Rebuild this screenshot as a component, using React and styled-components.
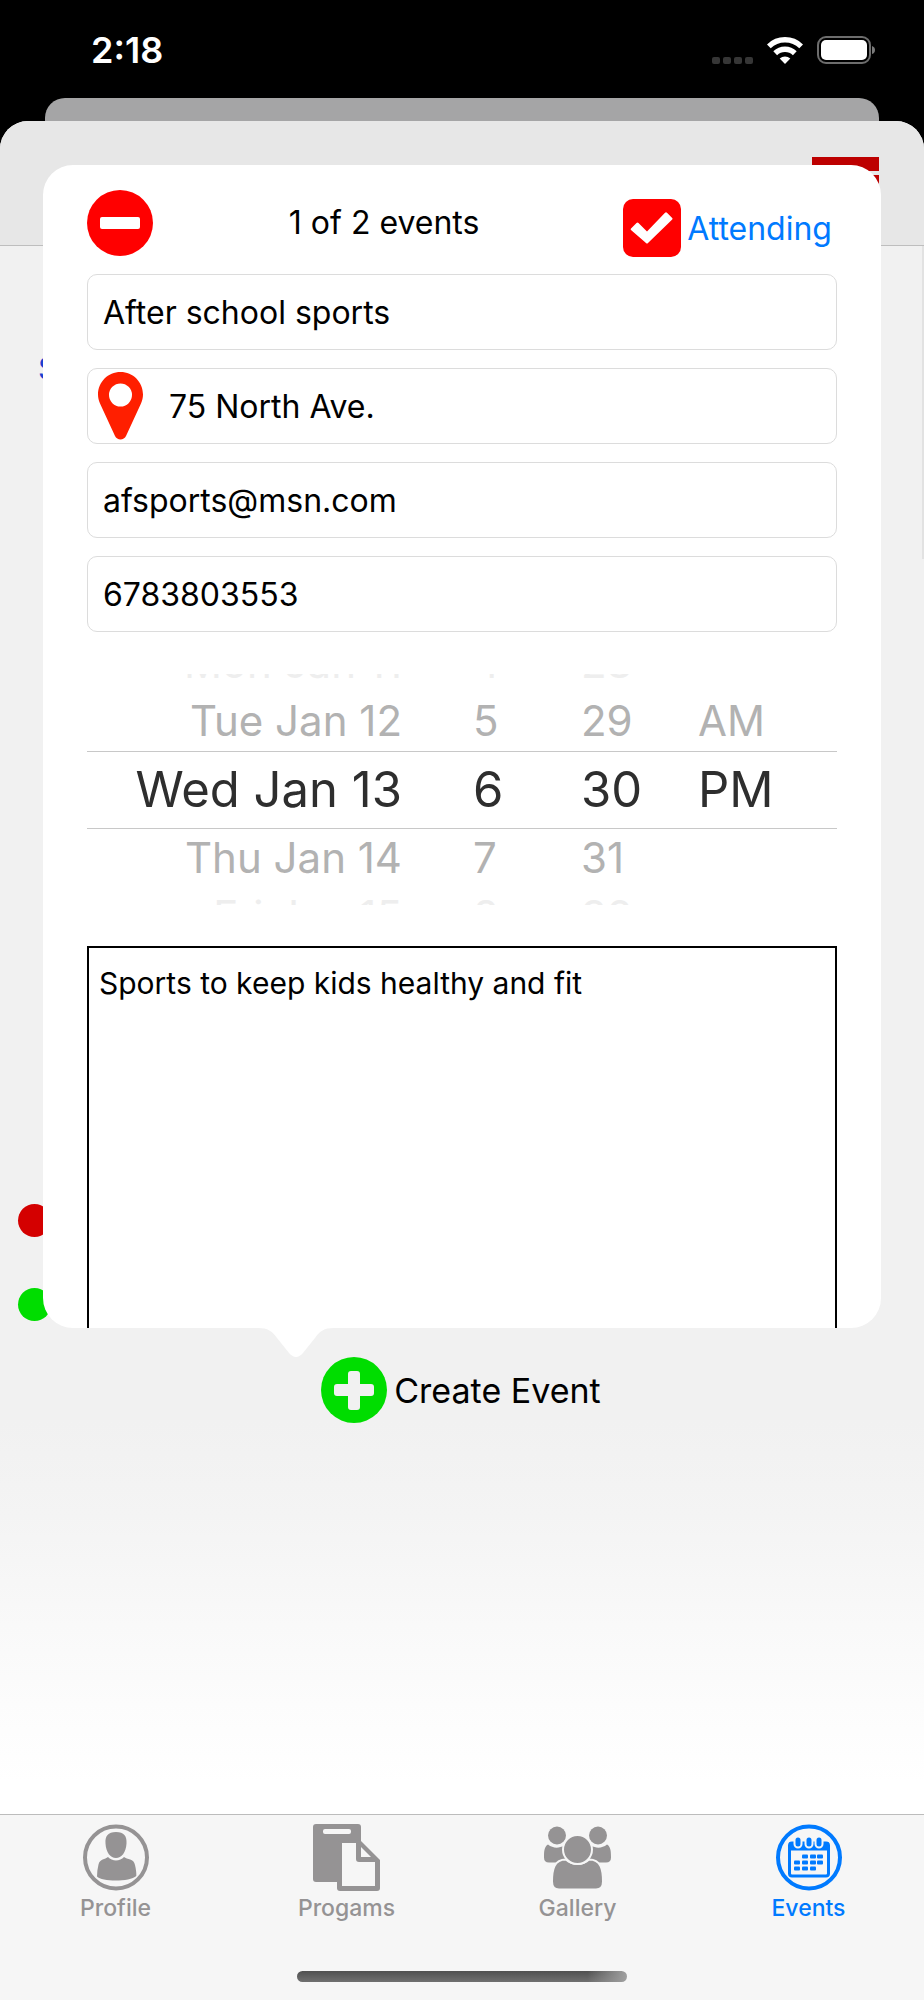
import React, { useState } from 'react';
import styled, { createGlobalStyle } from 'styled-components';

const GlobalStyle = createGlobalStyle`
    * {
        box-sizing: border-box;
    }

    body {
        margin: 0;
        background: #000;
        color: #000;
        font-family: Inter, "Liberation Sans", sans-serif;
    }

    button, input, textarea {
        font-family: inherit;
    }
`;

const Screen = styled.div`
    display: flex;
    flex-direction: column;
    min-height: 100vh;
`;

const StatusBar = styled.header`
    display: flex;
    justify-content: space-between;
    align-items: center;
    height: 98px;
    padding: 2px 48px 0 91px;
    color: #fff;
`;

const Clock = styled.time`
    font-size: 36px;
    font-weight: 600;
`;

const StatusIcons = styled.div`
    display: flex;
    align-items: center;
    gap: 14px;
`;

const BackSheet = styled.div`
    height: 23px;
    margin: 0 45px;
    border-radius: 20px 20px 0 0;
    background: #a5a5a6;
`;

const Sheet = styled.main`
    position: relative;
    display: flex;
    flex: 1;
    flex-direction: column;
    overflow: hidden;
    border-radius: 28px 28px 0 0;
    background: #fff;
`;

const NavBar = styled.nav`
    display: flex;
    justify-content: flex-end;
    height: 125px;
    padding: 36px 45px 0;
    border-bottom: 1px solid #bebebe;
    background: #e7e7e7;
`;

const MenuButton = styled.button`
    display: flex;
    flex-direction: column;
    gap: 4px;
    width: 67px;
    height: 54px;
    padding: 0;
    border: 0;
    background: none;
`;

const MenuBar = styled.span`
    height: 14px;
    background: #bd0000;
`;

const Content = styled.section`
    flex: 1;
    padding-top: 90px;
    border-right: 2px solid #e9e9e9;
    border-image: linear-gradient(#e2e2e2 20%, transparent 20%) 1;
    background: linear-gradient(#f1f1f1 75%, #f4f4f4 81%, #f9f9f9 88%, #fff 98%);
`;

const DayLabel = styled.div`
    height: 814px;
    padding: 14px 0 0 38px;
    color: #1a3fd0;
    font-size: 30px;
    line-height: 36px;
`;

const Legend = styled.div`
    display: flex;
    flex-direction: column;
    gap: 51px;
    padding: 54px 0 36px 18px;
`;

const Dot = styled.span`
    width: 33px;
    height: 33px;
    border-radius: 50%;
    background: ${(props) => props.$color};
`;

const CreateButton = styled.button`
    display: flex;
    align-items: center;
    gap: 7px;
    margin: 0 auto;
    padding: 0;
    border: 0;
    background: none;
    color: #000;
    font-size: 34px;
`;

const Popover = styled.form`
    position: absolute;
    top: 44px;
    left: 43px;
    right: 43px;
    padding: 25px 44px 0;
    border-radius: 30px;
    background: #fff;
`;

const Tail = styled.svg`
    position: absolute;
    top: 100%;
    left: 215px;
`;

const PopoverHeader = styled.div`
    display: flex;
    justify-content: space-between;
    margin-bottom: 18px;
    padding-right: 5px;
`;

const RemoveButton = styled.button`
    display: flex;
    padding: 0;
    border: 0;
    background: none;
`;

const Count = styled.div`
    margin-right: 8px;
    font-size: 32px;
    line-height: 66px;
`;

const Attending = styled.label`
    display: flex;
    align-items: center;
    gap: 6px;
    height: 56px;
    margin-top: 10px;
    color: #007aff;
    font-size: 32px;
`;

const CheckCell = styled.span`
    display: grid;

    > * {
        grid-area: 1 / 1;
    }

    svg {
        visibility: hidden;
        pointer-events: none;
    }

    input:checked + svg {
        visibility: visible;
    }
`;

const CheckInput = styled.input`
    appearance: none;
    width: 58px;
    height: 58px;
    margin: 0;
    border-radius: 10px;
    background: #ff0000;
`;

const Fields = styled.div`
    display: flex;
    flex-direction: column;
    gap: 18px;
`;

const Field = styled.label`
    display: flex;
    align-items: center;
    gap: 26px;
    height: 76px;
    padding-left: ${(props) => (props.$icon ? '10px' : '15px')};
    border: 1px solid #dcdcdc;
    border-radius: 10px;
`;

const TextInput = styled.input`
    flex: 1;
    min-width: 0;
    padding: 0;
    border: 0;
    outline: 0;
    background: none;
    color: #000;
    font-size: 32px;
`;

const Picker = styled.div`
    display: grid;
    grid-template-columns: 315px 108px 117px 1fr;
    height: 231px;
    margin: 42px 0 41px;
    overflow: hidden;
    background:
        linear-gradient(#c8c8c8, #c8c8c8) 0 77px / 100% 1px no-repeat,
        linear-gradient(#c8c8c8, #c8c8c8) 0 154px / 100% 1px no-repeat;
`;

const Wheel = styled.ul`
    display: flex;
    flex-direction: column;
    align-items: ${(props) => (props.$right ? 'flex-end' : 'flex-start')};
    justify-content: center;
    height: 231px;
    margin: 0;
    padding: 0 0 0 ${(props) => (props.$right ? '0' : '71px')};
    list-style: none;
    white-space: nowrap;
`;

const rowHeights = ['77px', '60px', '56px'];

const Option = styled.li`
    height: ${(props) => rowHeights[props.$distance]};
    flex-shrink: 0;
    color: ${(props) => ['#2e2e2e', '#b2b2b2', '#eeeeee'][props.$distance]};
    font-size: ${(props) => (props.$distance === 0 ? '49px' : '42px')};
    line-height: ${(props) => rowHeights[props.$distance]};
`;

const Notes = styled.textarea`
    display: block;
    width: 100%;
    height: 382px;
    padding: 17px 10px;
    border: 2px solid #000;
    border-bottom: 0;
    border-radius: 0;
    outline: 0;
    resize: none;
    background: none;
    color: #000;
    font-size: 30px;
    line-height: 36px;
`;

const TabBar = styled.footer`
    display: flex;
    flex-direction: column;
    align-items: center;
    justify-content: space-between;
    height: 186px;
    padding: 9px 0 18px;
    border-top: 1px solid #bcbcbc;
    background: #f6f6f6;
`;

const Tabs = styled.nav`
    display: grid;
    grid-template-columns: repeat(4, 1fr);
    width: 100%;
`;

const Tab = styled.a`
    display: flex;
    flex-direction: column;
    align-items: center;
    gap: 3px;
    color: ${(props) => (props.$active ? '#007aff' : '#959394')};
    font-size: 23px;
    font-weight: 500;
    line-height: 28px;
    text-decoration: none;

    svg {
        height: 67px;
    }
`;

const HomeIndicator = styled.div`
    width: 330px;
    height: 11px;
    border-radius: 6px;
    background:
        linear-gradient(to right, transparent 88%, #a0a0a0),
        linear-gradient(#505050, #707070);
`;

function SignalDots() {
  return (
    <svg width="41" height="27" viewBox="0 0 41 27" fill="#363636">
      {[0, 11, 22, 33].map((x) => (
        <rect key={x} x={x} y="20" width="8" height="7" rx="2" />
      ))}
    </svg>
  );
}

function WifiIcon() {
  return (
    <svg width="36" height="27" viewBox="0 0 36 27">
      <g fill="none" stroke="#fff" strokeWidth="5.4">
        <path d="M1.8 9.4a23 23 0 0 1 32.4 0" />
        <path d="M8.2 16.2a14 14 0 0 1 19.6 0" />
      </g>
      <path d="M12.7 21.4a8 8 0 0 1 10.6 0L18 27z" fill="#fff" />
    </svg>
  );
}

function BatteryIcon() {
  return (
    <svg width="59" height="28" viewBox="0 0 59 28">
      <rect x="1" y="1" width="52" height="26" rx="8" fill="none" stroke="#6d6d6d" strokeWidth="2" />
      <rect x="4" y="4" width="46" height="20" rx="5" fill="#fff" />
      <path d="M55 10q3 1 3 4t-3 4z" fill="#7a7a7a" />
    </svg>
  );
}

function MinusIcon() {
  return (
    <svg width="66" height="66" viewBox="0 0 66 66">
      <circle cx="33" cy="33" r="33" fill="#ff0000" />
      <rect x="13" y="27" width="40" height="12" rx="2" fill="#fff" />
    </svg>
  );
}

function PlusIcon() {
  return (
    <svg width="66" height="66" viewBox="0 0 66 66">
      <circle cx="33" cy="33" r="33" fill="#00dd00" />
      <g fill="#f1f1f1">
        <rect x="13" y="27" width="40" height="12" rx="3" />
        <rect x="27" y="14" width="12" height="39" rx="3" />
      </g>
    </svg>
  );
}

function CheckIcon() {
  return (
    <svg width="58" height="58" viewBox="0 0 58 58">
      <path d="M8 29.5 13.5 24q1-1 2 0l8.500 8.500L42 13.700q1-1 2 0l5.200 5.200q.8.8 0 1.600L25 44q-1 1-2 0L8 31q-.8-.8 0-1.500z" fill="#fff" />
    </svg>
  );
}

function PinIcon() {
  return (
    <svg width="45" height="68" viewBox="0 0 45 68">
      <path
        fillRule="evenodd"
        d="M22.500 0C10 0 0 10 0 22.500c0 3 .7 6.200 2 9L17 64c2 4.500 9 4.500 11 0l15-32.500c1.300-2.800 2-6 2-9C45 10 35 0 22.500 0zm0 11.500a11.500 11.500 0 1 1 0 23 11.500 11.500 0 0 1 0-23z"
        fill="#ff1f00"
      />
    </svg>
  );
}

function ProfileIcon() {
  return (
    <svg width="66" height="66" viewBox="0 0 66 66" fill="currentColor">
      <circle cx="33" cy="33" r="31" fill="none" stroke="currentColor" strokeWidth="4" />
      <path d="M33 7.500c-8 0-11 4-10.500 11.500C23 28 27.500 33.500 33 33.500S43 28 43.500 19C44 11.500 41 7.500 33 7.500z" />
      <path d="M25 32.500c4 4.500 12 4.500 16 0 3 2.500 10 1.500 11 8 1 4 1.500 8 1.300 11C47 57.500 19 57.500 14 52c0-4 .5-8 1.500-12 1.500-6 6.500-5 9.500-7.500z" />
    </svg>
  );
}

function ProgramsIcon() {
  return (
    <svg width="67" height="67" viewBox="0 0 67 67" fill="currentColor">
      <rect width="48" height="58" rx="3" />
      <path d="M24 18v46q0 3 3 3h37q3 0 3-3V36L47 16z" />
      <g fill="#f6f6f6">
        <rect x="10" y="5" width="28" height="5" rx="2" />
        <path d="M29 19h14v16q0 3 3 3h16v24H29z" />
        <path d="M48 23l10 10H48z" />
      </g>
    </svg>
  );
}

function GalleryIcon() {
  return (
    <svg width="67" height="66" viewBox="0 0 67 66" fill="currentColor">
      <circle cx="13" cy="11" r="9" />
      <circle cx="54" cy="11" r="9" />
      <path d="M4 20c5 4 11 4 16 1l4 17H5q-5 0-5-5c0-7 .5-11 4-13z" />
      <path d="M63 20c-5 4-11 4-16 1l-4 17h19q5 0 5-5c0-7-.5-11-4-13z" />
      <g stroke="#f6f6f6" strokeWidth="2">
        <path d="M22 35c6 6 17 6 23 0 12 0 14 10 14 22 0 5-2 8-7 8H15c-5 0-7-3-7-8 0-12 2-22 14-22z" />
        <circle cx="33.500" cy="25" r="14.500" />
      </g>
    </svg>
  );
}

// cell positions inside the little calendar page
const calendarCells = [
  [26, 30], [34, 30], [41, 30],
  [18, 36], [26, 36], [34, 36], [41, 36],
  [18, 42], [26, 42], [34, 42],
];

function EventsIcon() {
  return (
    <svg width="66" height="66" viewBox="0 0 66 66" fill="currentColor">
      <circle cx="33" cy="33" r="31" fill="none" stroke="currentColor" strokeWidth="4" />
      <rect x="13.500" y="18.500" width="39" height="33" rx="2.500" fill="none" stroke="currentColor" strokeWidth="3" />
      <rect x="13" y="18" width="40" height="8" />
      {[22, 33, 43].map((x) => (
        <rect key={x} x={x - 3.5} y="12" width="7" height="11" rx="3.500" stroke="#f6f6f6" strokeWidth="2" />
      ))}
      {calendarCells.map(([x, y]) => (
        <rect key={`${x}-${y}`} x={x} y={y} width="6" height="4" rx="1" />
      ))}
    </svg>
  );
}

const wheels = [
  { label: 'Date', right: true, values: ['Mon Jan 11', 'Tue Jan 12', 'Wed Jan 13', 'Thu Jan 14', 'Fri Jan 15'] },
  { label: 'Hour', values: ['4', '5', '6', '7', '8'] },
  { label: 'Minute', values: ['28', '29', '30', '31', '32'] },
  { label: 'Period', values: ['', 'AM', 'PM', '', ''] },
];

const tabs = [
  { name: 'Profile', Icon: ProfileIcon },
  { name: 'Progams', Icon: ProgramsIcon },
  { name: 'Gallery', Icon: GalleryIcon },
  { name: 'Events', Icon: EventsIcon, active: true },
];

function DatePicker() {
  return (
    <Picker>
      {wheels.map(({ label, right, values }) => (
        <Wheel key={label} role="listbox" aria-label={label} $right={right}>
          {values.map((value, index) => (
            <Option
              key={index}
              role={value ? 'option' : 'presentation'}
              aria-selected={value ? index === 2 : undefined}
              $distance={Math.abs(index - 2)}
            >
              {value}
            </Option>
          ))}
        </Wheel>
      ))}
    </Picker>
  );
}

function EventPopover() {
  const [attending, setAttending] = useState(true);

  return (
    <Popover>
      <PopoverHeader>
        <RemoveButton type="button" aria-label="Remove event">
          <MinusIcon />
        </RemoveButton>
        <Count>1 of 2 events</Count>
        <Attending>
          <CheckCell>
            <CheckInput type="checkbox" checked={attending} onChange={() => setAttending(!attending)} />
            <CheckIcon />
          </CheckCell>
          Attending
        </Attending>
      </PopoverHeader>
      <Fields>
        <Field>
          <TextInput aria-label="Event name" defaultValue="After school sports" />
        </Field>
        <Field $icon>
          <PinIcon />
          <TextInput aria-label="Address" defaultValue="75 North Ave." />
        </Field>
        <Field>
          <TextInput type="email" aria-label="Email" defaultValue="afsports@msn.com" />
        </Field>
        <Field>
          <TextInput type="tel" aria-label="Phone" defaultValue="6783803553" />
        </Field>
      </Fields>
      <DatePicker />
      <Notes aria-label="Description" defaultValue="Sports to keep kids healthy and fit" />
      <Tail width="76" height="29" viewBox="0 0 76 29">
        <path d="M0 0c10 0 14 3 19 10l12 15q7 8 14 0l12-15c5-7 9-10 19-10z" fill="#fff" />
      </Tail>
    </Popover>
  );
}

function App() {
  return (
    <Screen>
      <GlobalStyle />
      <StatusBar>
        <Clock>2:18</Clock>
        <StatusIcons>
          <SignalDots />
          <WifiIcon />
          <BatteryIcon />
        </StatusIcons>
      </StatusBar>
      <BackSheet />
      <Sheet>
        <NavBar>
          <MenuButton aria-label="Menu">
            <MenuBar />
            <MenuBar />
            <MenuBar />
          </MenuButton>
        </NavBar>
        <Content>
          <DayLabel>S</DayLabel>
          <Legend>
            <Dot $color="#d40000" />
            <Dot $color="#00dd00" />
          </Legend>
          <CreateButton>
            <PlusIcon />
            Create Event
          </CreateButton>
        </Content>
        <EventPopover />
        <TabBar>
          <Tabs>
            {tabs.map(({ name, Icon, active }) => (
              <Tab key={name} href={`#${name.toLowerCase()}`} $active={active}>
                <Icon />
                {name}
              </Tab>
            ))}
          </Tabs>
          <HomeIndicator />
        </TabBar>
      </Sheet>
    </Screen>
  );
}

export default App;
